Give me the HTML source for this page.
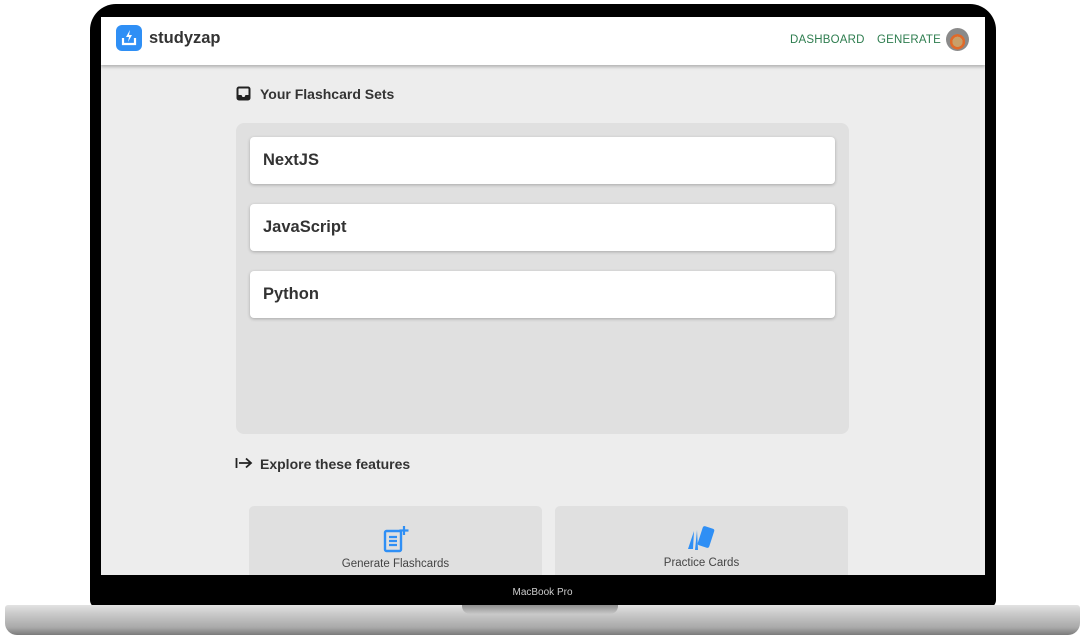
<!DOCTYPE html>
<html><head><meta charset="utf-8"><style>
*{box-sizing:border-box;margin:0;padding:0}
body{width:1085px;height:640px;background:#fff;position:relative;overflow:hidden;font-family:"Liberation Sans",sans-serif;color:#333}
.bezel{position:absolute;left:90px;top:4px;width:906px;height:604px;background:#000;border-radius:26px 26px 8px 8px}
.screen{position:absolute;left:101px;top:17px;width:884px;height:558px;background:#ededed;overflow:hidden}
.hdr{position:absolute;left:0;top:0;width:884px;height:48px;background:#fff;box-shadow:0 2px 3px rgba(0,0,0,.25)}
.logo{position:absolute;left:15px;top:8px;width:26px;height:26px;background:#2f8ff5;border-radius:6px}
.brand{position:absolute;left:48px;top:12px;font-weight:bold;font-size:16.5px;color:#333}
.nav{position:absolute;top:17px;font-size:11.5px;color:#2e7d4f;letter-spacing:.2px}
.av{position:absolute;left:845px;top:11px;width:23px;height:23px;border-radius:50%;background:radial-gradient(circle at 50% 60%,#c8a06a 0 28%,#e06a2a 29% 42%,#8a8a8a 43%)}
.h{position:absolute;font-weight:bold;font-size:14px;color:#333}
.panel{position:absolute;left:135px;top:106px;width:613px;height:311px;background:#e0e0e0;border-radius:8px}
.card{position:absolute;left:14px;width:585px;height:47px;background:#fff;border-radius:4px;box-shadow:0 1px 3px rgba(0,0,0,.25);font-weight:bold;font-size:16.5px;padding:14px 13px}
.feat{position:absolute;top:489px;width:293px;height:80px;background:#e0e0e0;border-radius:5px;font-size:11.5px;color:#444;text-align:center}
.base{position:absolute;left:5px;top:605px;width:1075px;height:30px;border-radius:3px 3px 12px 12px;background:linear-gradient(#e2e2e2,#c9c9c9 30%,#a9a9a9 75%,#7a7a7a)}
.notch{position:absolute;left:462px;top:605px;width:156px;height:9px;background:linear-gradient(#8e8e8e,#c8c8c8);border-radius:0 0 8px 8px}
.mbp{position:absolute;left:0;width:1085px;top:587px;text-align:center;color:#ccc;font-size:10px}
</style></head><body>
<div class="bezel"></div>
<div class="screen">
 <div class="hdr">
  <div class="logo"><svg width="26" height="26" viewBox="0 0 26 26"><path d="M7 13v6h12v-6" fill="none" stroke="#fff" stroke-width="2.2"/><path d="M14 5l-4 7h3l-1 5 4-7h-3z" fill="#fff"/></svg></div>
  <div class="brand">studyzap</div>
  <div class="nav" style="left:689px">DASHBOARD</div>
  <div class="nav" style="left:776px">GENERATE</div>
  <div class="av"></div>
 </div>
 <svg style="position:absolute;left:135px;top:69px" width="15" height="15" viewBox="0 0 15 15"><rect x="1.5" y="1.5" width="12" height="12" rx="1.5" fill="none" stroke="#222" stroke-width="2"/><path d="M2 9h3.5l1 2h2l1-2H13v4H2z" fill="#222"/></svg>
 <div class="h" style="left:159px;top:69px">Your Flashcard Sets</div>
 <div class="panel">
  <div class="card" style="top:14px">NextJS</div>
  <div class="card" style="top:81px">JavaScript</div>
  <div class="card" style="top:148px">Python</div>
 </div>
 <svg style="position:absolute;left:134px;top:440px" width="18" height="12" viewBox="0 0 18 12"><path d="M1.5 1v10M4 6h12M11 1.5l5 4.5-5 4.5" fill="none" stroke="#222" stroke-width="1.8"/></svg>
 <div class="h" style="left:159px;top:439px">Explore these features</div>
 <div class="feat" style="left:148px">
  <svg style="position:absolute;left:134px;top:19px" width="26" height="28" viewBox="0 0 26 28"><rect x="2" y="6" width="16" height="20" rx="1.5" fill="none" stroke="#2f8ff5" stroke-width="2.4"/><path d="M6 12h8M6 16h8M6 20h8" stroke="#2f8ff5" stroke-width="2.2"/><path d="M21 1v9M16.5 5.5h9" stroke="#2f8ff5" stroke-width="2.2"/></svg>
  <div style="position:absolute;left:0;right:0;top:52px">Generate Flashcards</div>
 </div>
 <div class="feat" style="left:454px">
  <svg style="position:absolute;left:131px;top:19px" width="32" height="28" viewBox="0 0 32 28"><path d="M8 6l-6 18h5z" fill="#2f8ff5"/><path d="M11 5l-2 20h3z" fill="#2f8ff5"/><rect x="14" y="2" width="12" height="20" rx="2" transform="rotate(18 20 12)" fill="#2f8ff5"/></svg>
  <div style="position:absolute;left:0;right:0;top:51px">Practice Cards</div>
 </div>
</div>
<div class="mbp">MacBook Pro</div>
<div class="base"></div>
<div class="notch"></div>
</body></html>
